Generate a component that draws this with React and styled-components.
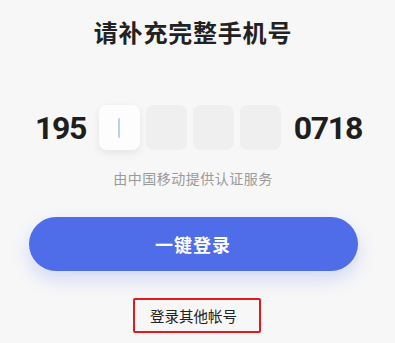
import styled, { createGlobalStyle } from "styled-components"

const Global = createGlobalStyle`
  html, body {
    margin: 0;
    padding: 0;
    background: #f7f7f8;
  }
  body {
    font-family: "Noto Sans", "Noto Sans CJK SC", sans-serif;
  }
`

const Page = styled.div`
  width: 395px;
  height: 343px;
  display: flex;
  flex-direction: column;
  align-items: center;
  box-sizing: border-box;
  padding: 16px 9px 0 0;
  background: #f7f7f8;
  overflow: hidden;
`

const Title = styled.div`
  font-size: 24px;
  line-height: 34px;
  font-weight: 700;
  color: #222;
  letter-spacing: 0.8px;
`

const PhoneRow = styled.div`
  margin-top: 55px;
  display: flex;
  align-items: center;
  width: 395px;
  margin-right: -9px;
  box-sizing: border-box;
  padding: 0 33px 0 35px;
`

const Digits = styled.div`
  font-family: Roboto, "Noto Sans", sans-serif;
  font-size: 32px;
  line-height: 44px;
  font-weight: 700;
  color: #1e1e1e;
  letter-spacing: -1.3px;
`

const Boxes = styled.div`
  display: flex;
  gap: 6px;
  margin: 0 auto;
`

const Cell = styled.div`
  width: 41px;
  height: 45px;
  border-radius: 8px;
  background: ${p => (p.$active ? "#fdfdfe" : "#efeff0")};
  box-shadow: ${p => (p.$active ? "0 3px 8px rgba(0,0,0,0.08)" : "none")};
  display: flex;
  align-items: center;
  justify-content: center;
`

const Caret = styled.div`
  width: 2px;
  height: 20px;
  background: #b9d0f3;
  border-radius: 1px;
`

const Provider = styled.div`
  margin-top: 19px;
  font-size: 14px;
  line-height: 20px;
  color: #9a9a9a;
  letter-spacing: 0.5px;
`

const LoginButton = styled.button`
  margin-top: 28px;
  width: 329px;
  height: 54px;
  border: none;
  border-radius: 27px;
  background: #4f6ce9;
  color: #fff;
  font-family: "Noto Sans", "Noto Sans CJK SC", sans-serif;
  font-size: 18px;
  font-weight: 700;
  letter-spacing: 1px;
  box-shadow: 0 8px 18px rgba(79, 108, 233, 0.22);
  cursor: pointer;
`

const OtherAccount = styled.div`
  margin: 27px 0 0 8px;
  width: 128px;
  height: 35px;
  box-sizing: border-box;
  padding-left: 15px;
  border: 2px solid #e3191c;
  border-radius: 2px;
  display: flex;
  align-items: center;
  font-size: 14.5px;
  color: #222;
`

export default function App() {
  return (
    <>
      <Global />
      <Page>
        <Title>请补充完整手机号</Title>
        <PhoneRow>
          <Digits>195</Digits>
          <Boxes>
            <Cell $active><Caret /></Cell>
            <Cell />
            <Cell />
            <Cell />
          </Boxes>
          <Digits>0718</Digits>
        </PhoneRow>
        <Provider>由中国移动提供认证服务</Provider>
        <LoginButton>一键登录</LoginButton>
        <OtherAccount>登录其他帐号</OtherAccount>
      </Page>
    </>
  )
}
